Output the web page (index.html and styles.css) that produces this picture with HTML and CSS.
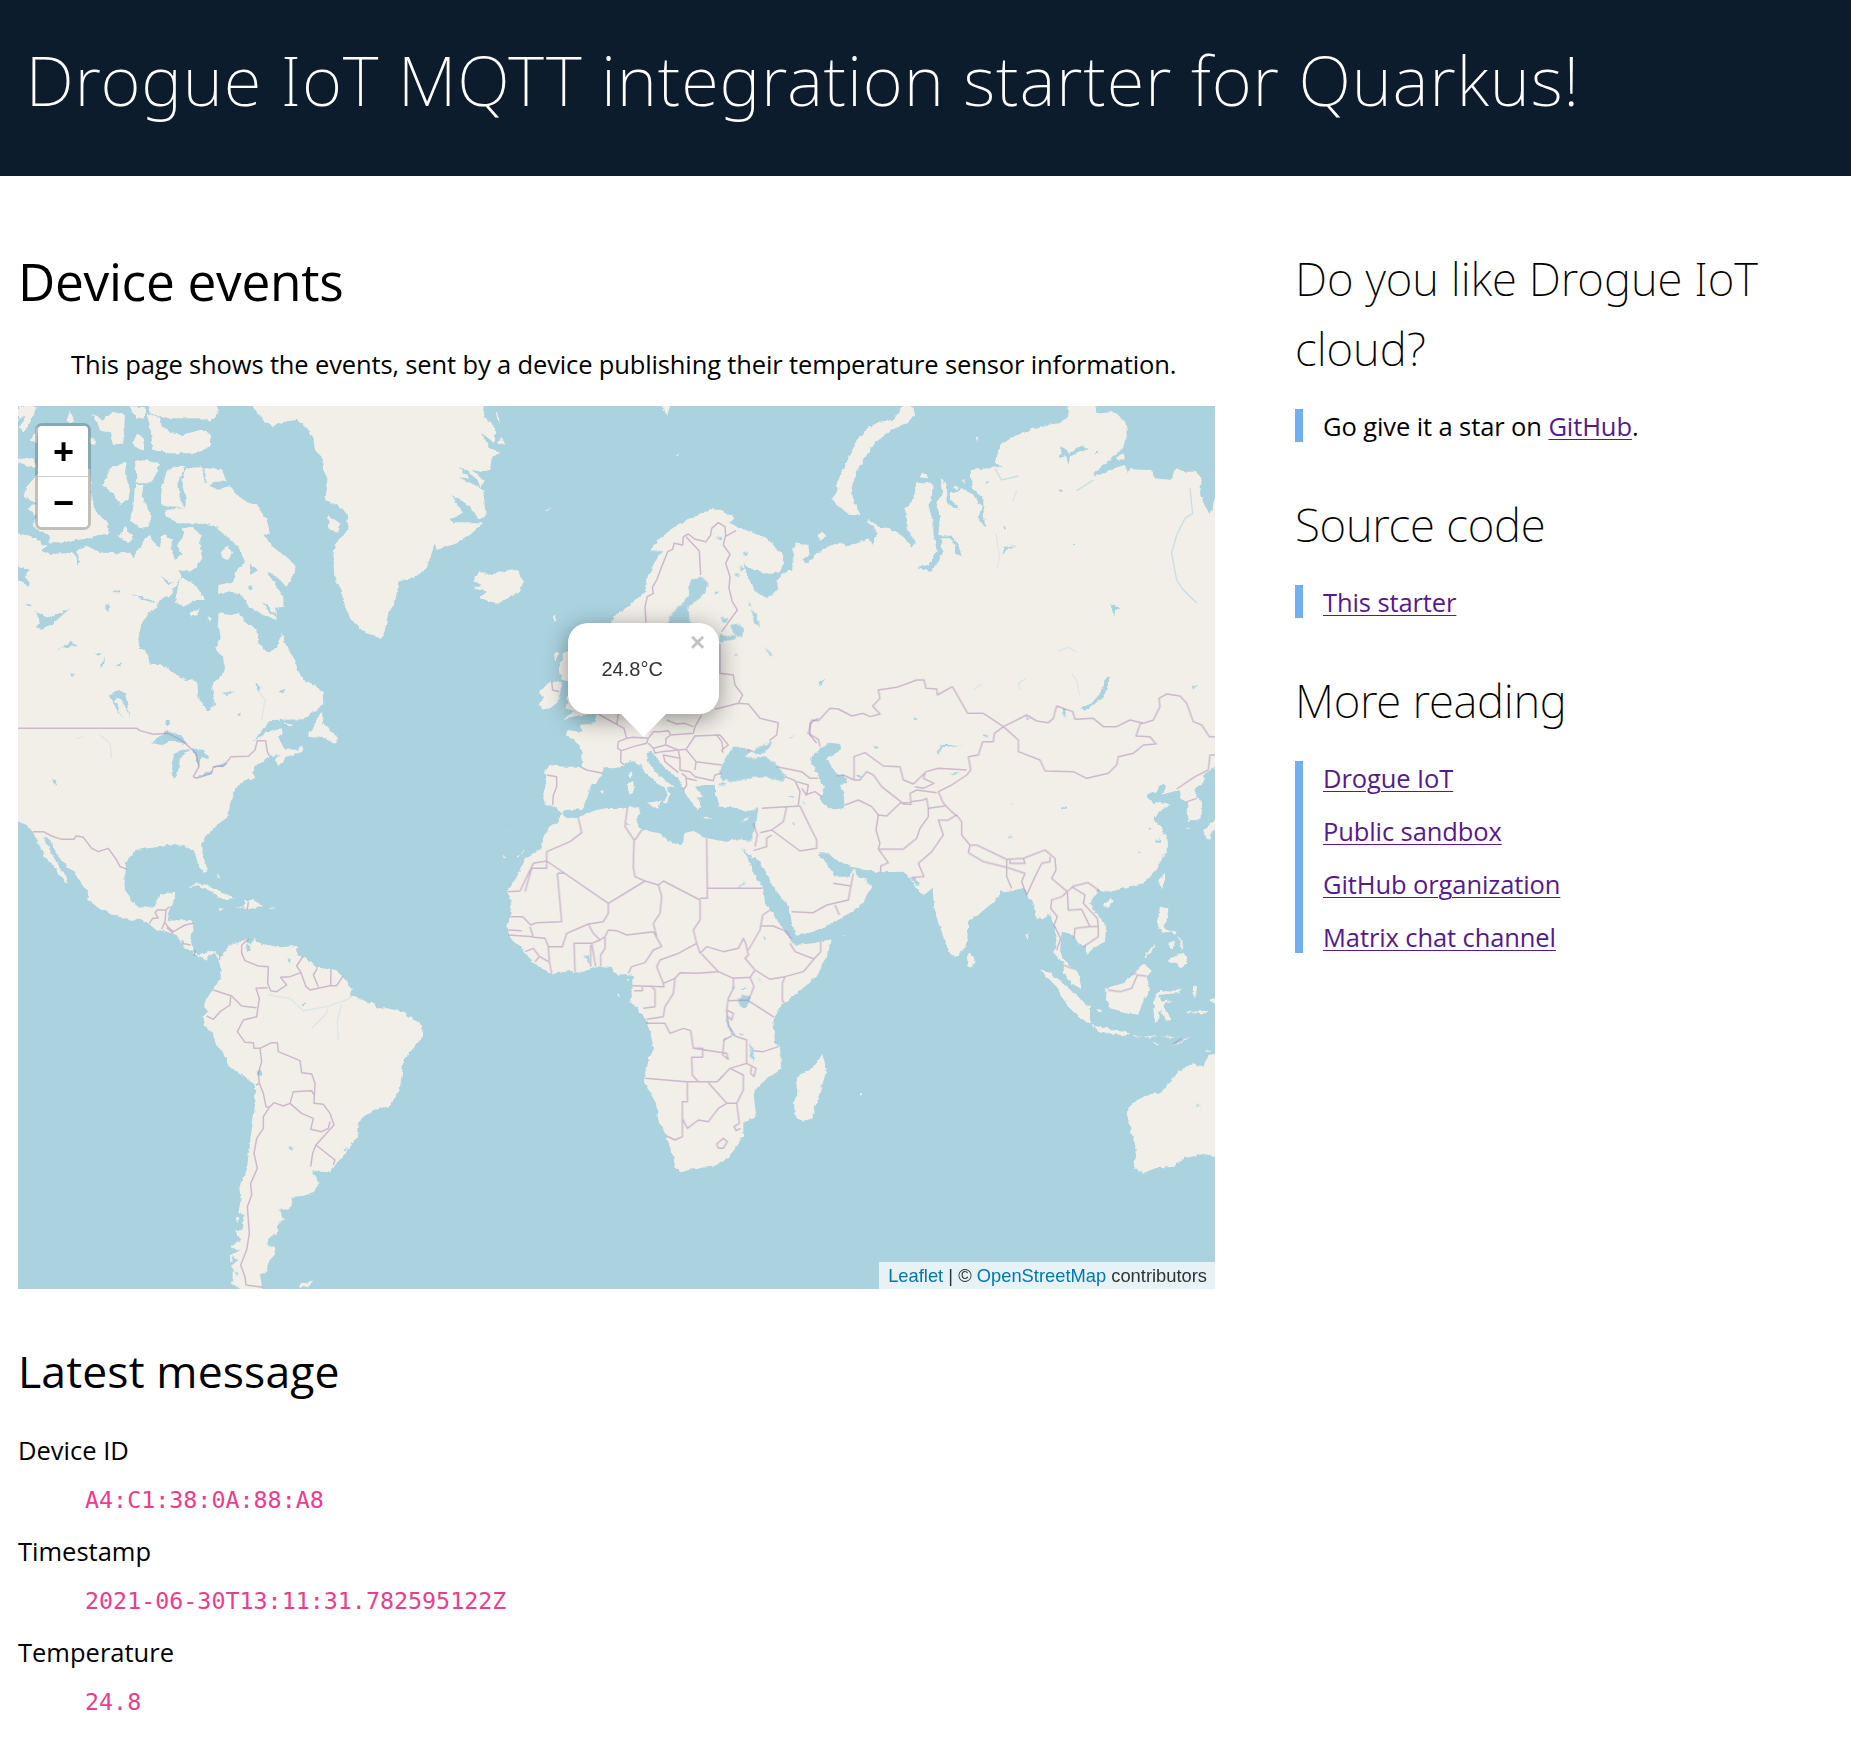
FILE: index.html
```html
<!DOCTYPE html>
<html lang="en">
<head>
<meta charset="utf-8">
<title>Drogue IoT MQTT integration starter for Quarkus!</title>
<link rel="stylesheet" href="styles.css">
</head>
<body>
<header class="banner"><h1 class="banner-title">Drogue IoT MQTT integration starter for Quarkus!</h1></header>
<div class="page">
<main class="content">
<h2 class="title">Device events</h2>
<p class="intro">This page shows the events, sent by a device publishing their temperature sensor information.</p>
<div class="map">
<svg class="tiles" viewBox="18 406 1197 883" preserveAspectRatio="none" aria-hidden="true">
<defs>
<filter id="coast" filterUnits="userSpaceOnUse" x="0" y="390" width="1240" height="920">
<feTurbulence type="fractalNoise" baseFrequency="0.2" numOctaves="2" seed="4" result="n"/>
<feDisplacementMap in="SourceGraphic" in2="n" scale="4" xChannelSelector="R" yChannelSelector="G"/>
<feGaussianBlur stdDeviation="0.5"/>
</filter>
</defs>
<g filter="url(#coast)">
<!-- Canada, United States, Greenland west -->
<g class="land" transform="translate(0 390) scale(.33333)">
<path d="M30 430 54 430 85 437 110 445 125 462 140 470 122 482 150 492 200 490 215 485 230 500 232 530 237 510 232 480 262 468 300 488 360 490 395 488 400 510 408 488 420 470 435 445 450 435 460 455 480 470 484 440 495 432 515 450 515 480 525 510 545 490 530 465 550 440 548 412 575 412 602 432 600 470 607 505 590 530 570 545 530 540 545 555 525 590 510 618 485 625 470 655 445 670 425 700 415 745 418 775 435 780 450 822 480 822 510 840 550 868 592 873 595 925 625 965 645 945 635 885 665 860 675 835 668 800 647 778 662 745 655 700 655 670 690 675 715 670 745 705 772 715 775 760 805 790 830 770 845 730 860 770 885 810 893 840 910 870 945 885 968 910 970 945 940 965 910 988 815 990 790 1015 760 1055 800 1025 845 1015 848 1030 835 1040 850 1075 890 1080 910 1065 905 1085 860 1100 835 1128 822 1115 840 1095 808 1098 765 1130 755 1145 768 1165 740 1170 710 1190 700 1210 690 1240 685 1280 650 1305 620 1335 606 1360 610 1400 623 1440 612 1447 595 1425 585 1390 560 1370 520 1362 480 1370 440 1375 410 1380 385 1405 370 1430 260 1500 220 1445 185 1410 165 1380 150 1350 130 1340 160 1400 180 1435 200 1460 205 1480 175 1455 165 1430 135 1400 110 1350 98 1325 80 1305 54 1295 30 1290z"/>
<path d="M560 235 605 232 615 280 655 300 690 285 710 315 740 335 770 345 800 390 810 430 790 435 830 480 860 500 890 530 860 590 830 560 800 545 850 620 850 650 825 655 830 690 790 675 745 650 735 630 720 610 690 605 655 610 655 585 700 575 705 550 735 515 715 470 680 440 640 405 590 400 530 400 495 375 495 360 555 355 560 320 545 290 550 255zM483 345 485 295 500 245 525 228 555 228 535 275 540 330 558 355 510 352zM613 235 665 238 680 275 640 275 622 290zM440 40 655 40 655 70 630 95 605 85 560 85 490 85 450 70zM440 70 480 85 485 105 510 128 545 135 600 120 630 130 630 170 590 190 510 190 460 180 450 110zM405 215 440 210 480 222 455 280 410 280zM330 235 380 215 375 250 390 300 385 330 360 345 340 310 305 285 320 260zM405 285 430 285 425 320 455 380 445 410 420 415 390 390 400 350zM30 208 100 205 115 250 80 290 70 320 110 340 82 355 110 380 97 410 145 435 150 460 180 460 230 450 270 445 325 430 325 400 290 370 275 330 270 235 120 240zM355 440 375 410 400 440 385 460zM54 48 110 48 100 80 70 130 60 110 80 75 54 90zM200 90 212 60 222 95 205 100zM275 70 310 90 340 65 375 75 370 160 340 165 330 130 300 120zM388 48 435 52 435 85 410 85zM412 130 432 150 432 182 395 165zM90 150 115 110 110 160zM270 145 288 150 285 165 272 160zM665 480 685 470 697 490 680 512 665 500zM540 560 580 580 615 630 590 630 550 650 525 635zM570 670 598 655 590 675 575 680zM622 675 635 680 630 697zM965 962 970 1000 1010 1040 1010 1062 975 1045 920 1040 940 1010zM850 995 882 1008 870 1012z"/>
<path d="M750 40 770 65 790 90 820 108 850 95 890 90 920 115 940 145 945 180 965 200 970 240 985 270 975 330 1000 340 1040 370 1045 420 1005 460 1000 500 1003 560 1025 600 1035 650 1055 690 1085 720 1145 748 1155 720 1165 670 1185 640 1195 575 1230 565 1230 40z"/>
<path d="M985 375 1020 400 1015 430 985 415z"/>
</g>
<!-- Greenland east, Iceland, Europe -->
<g class="land" transform="translate(400 390) scale(.33333)">
<path d="M-10 572 40 565 80 535 95 490 105 460 110 480 170 460 210 435 248 400 160 400 150 385 190 370 155 315 200 340 235 385 257 382 250 300 235 290 175 262 205 265 180 230 220 255 245 295 250 270 215 240 245 245 270 240 275 205 300 185 270 175 245 130 285 160 285 110 255 85 245 40-10 40z"/>
<path d="M220 572 240 540 260 555 290 550 335 538 355 545 370 575 360 605 295 640 260 632 240 622 260 605 220 595 245 585zM293 155 305 145 318 162 300 165zM293 60 300 105 290 80zM435 362 450 352 445 362zM785 40 808 55 800 77zM830 195 838 193 836 199zM458 680 470 676 466 700zM430 890 455 872 485 880 475 935 450 955 430 958 415 945 430 925 420 905zM520 780 485 790 485 810 475 840 490 870 520 880zM463 790 478 790 465 815zM520 900 495 925 505 940 490 955 525 962 485 992 525 978 580 972 580 900zM688 1150 698 1142 696 1168 688 1165zM683 1180 700 1173 702 1208 690 1215 684 1205zM740 1238 782 1232 775 1257zM900 1278 940 1283 920 1287zM1025 1290 1052 1279 1035 1293zM600 1203 612 1200 606 1210z"/>
<path d="M635 698 640 680 690 645 735 605 745 555 770 505 790 480 750 482 775 450 830 405 880 380 930 358 965 360 1003 385 990 400 1050 425 1100 445 1145 490 1152 520 1140 545 1110 552 1060 540 1030 520 1045 560 1060 600 1100 627 1135 600 1130 570 1165 540 1195 540 1190 490 1185 460 1225 470 1228 495 1205 510 1225 520 1250 490 1270 480 1270 1390 1050 1390 1058 1340 1070 1290 1075 1255 1040 1265 1000 1252 960 1250 945 1215 945 1185 915 1185 885 1190 912 1225 893 1222 905 1250 890 1258 870 1230 848 1195 835 1165 800 1140 770 1105 755 1085 740 1090 745 1115 765 1145 790 1165 825 1195 800 1190 812 1210 800 1240 790 1240 803 1215 795 1195 770 1180 735 1145 720 1125 690 1110 665 1130 640 1135 610 1135 605 1160 570 1195 560 1230 545 1258 500 1260 485 1270 465 1250 435 1245 430 1215 440 1170 435 1140 450 1125 490 1130 545 1130 548 1085 525 1050 500 1035 500 1020 545 1025 540 1005 585 1000 595 965 700 900 700 750z"/>
</g>
<!-- Northern Asia -->
<g class="land" transform="translate(800 390) scale(.33333)">
<path d="M-20 470 0 462 20 465 30 490 5 500 10 520 40 525 45 495 80 470 125 455 140 470 180 455 205 445 215 465 230 430 222 412 200 395 205 387 235 410 270 415 310 440 338 472 347 455 320 415 315 355 338 335 350 275 398 280 395 330 385 345 400 400 400 430 410 480 385 525 350 530 390 545 410 525 428 490 422 445 450 445 465 465 465 490 485 498 475 465 455 437 415 435 420 380 407 340 430 310 422 265 438 285 440 340 480 360 470 345 450 330 450 310 490 298 520 315 545 350 535 385 555 412 550 350 550 325 515 295 512 240 560 235 605 230 585 215 600 165 650 135 700 115 740 105 775 100 805 80 805 40 885 40 890 72 940 65 975 95 983 130 970 170 930 210 880 250 885 260 940 235 975 225 980 250 990 238 1050 240 1065 265 1115 270 1125 235 1160 245 1190 245 1205 270 1200 310 1215 350 1232 372 1245 320 1270 310 1270 1130 1245 1135 1215 1150 1205 1180 1180 1200 1205 1240 1205 1285 1165 1295 1160 1260 1165 1235 1140 1225 1145 1205 1130 1197 1085 1215 1100 1190 1090 1180 1065 1200 1040 1215 1045 1235 1060 1245 1075 1235 1110 1243 1065 1275 1060 1290 1085 1310 1100 1350 1100 1390-20 1390z"/>
<path d="M315 40 340 50 345 75 320 100 270 120 225 160 200 195 175 235 155 290 160 335 182 375 150 375 110 345 97 325 115 300 110 280 140 220 170 150 210 110 240 95 280 90zM52 435 65 423 78 437 60 452zM358 262 372 245 383 265zM485 270 495 268 493 282zM950 200 970 190 975 205 960 212zM527 140 535 142 532 155zM462 292 480 290 470 300z"/>
</g>
<!-- Central and South America, Caribbean -->
<g class="land" transform="translate(0 840) scale(.33333)">
<path d="M150-10 165 30 185 60 220 95 250 125 265 155 262 180 300 205 350 228 395 242 420 235 448 252 465 268 500 275 530 285 550 320 575 335 600 350 620 362 625 345 645 340 655 360 665 390 660 420 640 445 618 480 612 500 625 515 608 530 612 555 635 580 655 620 680 655 682 675 715 700 745 718 765 735 766 790 758 850 752 890 745 950 740 990 718 1040 722 1080 715 1120 733 1125 728 1170 705 1170 722 1200 690 1222 718 1230 692 1245 715 1260 690 1280 712 1300 695 1330 720 1346 720 1360 790 1360 780 1305 800 1290 805 1265 828 1240 825 1225 803 1215 805 1195 830 1180 835 1150 850 1140 838 1105 860 1110 878 1100 878 1070 910 1068 940 1060 957 1030 945 1010 935 990 960 995 990 997 1010 970 1040 935 1072 890 1073 850 1100 825 1130 808 1165 803 1180 780 1198 750 1205 710 1210 660 1240 625 1265 595 1268 560 1260 545 1240 540 1210 515 1160 505 1130 505 1125 492 1080 478 1050 468 1055 450 1030 410 1000 388 950 383 925 360 895 345 890 318 840 322 800 315 770 305 765 295 755 310 735 310 748 292 725 305 690 315 665 350 635 332 600 345 580 335 573 305 580 255 570 240 500 242 505 215 520 190 527 155 480 165 465 198 420 205 395 185 375 150 373 120 378 85 370 -10z"/>
<path d="M562 145 590 130 625 135 660 155 705 175 665 178 640 160 600 138zM705 200 735 200 730 180 760 180 790 198 745 208zM650 203 675 207 660 210zM808 203 828 204 812 207zM652 100 660 115 652 112zM900 1330 940 1325 925 1340 900 1342zM708 1130 715 1128 712 1155zM838 1132 856 1136 848 1144z"/>
<path d="M690 1245h8v20h-8zM698 1290h8v30h-8zM882 318h12v6h-12z"/>
</g>
<!-- Africa and Arabia -->
<g class="land" transform="translate(480 780) scale(.33333)">
<path d="M243 100 255 110 295 115 320 100 370 85 440 83 475 78 480 95 470 130 485 150 540 160 570 185 600 195 610 185 612 160 640 152 680 175 740 185 770 178 810 182 825 178 840 160 845 190 822 232 815 235 790 203 815 265 830 300 850 325 855 370 885 410 905 440 925 470 945 495 1000 490 1052 478 1045 520 1010 590 950 640 900 680 880 720 885 790 900 800 903 865 850 905 820 935 828 1005 790 1030 790 1065 750 1130 700 1160 640 1165 605 1177 585 1160 580 1130 560 1070 535 1020 528 970 492 905 500 850 520 810 512 760 495 715 450 660 460 620 460 590 440 582 410 585 390 560 360 558 300 578 270 573 215 582 160 550 130 510 90 475 80 435 95 400 90 350 80 335 105 300 135 235 185 205 190 170 205 145 235 125z"/>
<path d="M835 80 835 150 825 190 820 220 850 260 880 320 925 380 940 440 948 467 1000 455 1065 425 1110 400 1145 370 1173 325 1160 305 1130 290 1125 265 1110 290 1065 290 1050 265 1040 250 1010 215 1010 200 1030 198 1050 225 1075 245 1110 255 1135 250 1140 268 1200 277 1200 0 835 0z"/>
<path d="M1027 822 1040 870 1025 920 995 1015 970 1025 945 1010 942 965 955 935 950 890 1000 865zM68 228 80 232 72 235zM110 228 120 225 112 233zM122 225 130 212 132 220zM1110 955 1120 957zM1085 466 1098 468 1090 472zM440 598 448 594 446 604zM413 644h6v5h-6zM1140 940h6v6h-6zM78 153h6v4h-6z"/>
</g>
<!-- Southern Asia and Oceania -->
<g class="land" transform="translate(860 780) scale(.33333)">
<path d="M-30 260 0 265 60 277 130 275 150 295 165 320 190 345 218 325 222 380 235 430 255 480 270 520 290 532 320 500 325 425 360 400 420 350 420 335 480 328 490 320 500 345 520 370 530 415 550 418 565 400 580 430 590 470 583 520 610 550 612 580 635 610 665 628 655 580 610 540 600 515 605 455 640 465 655 490 678 500 677 525 705 500 735 485 738 440 720 415 688 370 715 330 755 335 800 322 850 310 885 275 918 215 920 190 905 160 880 115 905 90 925 75 885 75 860 50 860 40 885 35 910 10 920 20 910 42 960 30 962 55 985 70 980 100 985 127 1023 110 1025 75 1003 30 1030 10 1035-10-30-10z"/>
<path d="M1080 820 1045 825 1030 860 1000 850 960 870 935 900 905 935 850 950 815 970 800 1000 815 1060 830 1110 822 1160 850 1182 885 1165 940 1160 975 1135 1030 1122 1080 1130zM540 570 570 578 620 620 655 650 690 690 690 728 660 715 620 675 590 620zM690 735 740 745 810 760 800 768 720 755zM735 625 790 610 820 580 850 550 875 572 860 590 870 630 850 660 835 705 790 695 750 685 740 655zM885 645 900 632 945 635 962 625 960 638 895 645 905 665 935 660 908 675 935 720 920 722 900 690 893 725 885 725 880 690zM900 380 925 385 920 420 910 440 930 455 905 458 890 430zM925 540 970 515 983 545 965 565 950 548 925 548zM895 300 915 278 915 300 903 327zM730 372 750 357 762 362 745 383 732 382zM325 510 348 545 335 563 320 558zM1030 150 1075 110 1075 140 1055 155 1048 180 1035 170zM850 530 885 490 880 505 855 532zM925 490 945 485 935 512zM955 465 968 490 965 512zM930 450 950 455 945 465zM1000 615 1012 620 1005 655 998 640zM975 695 1045 692 1040 700 980 700zM1045 660 1080 650 1080 680zM935 798 990 768 960 790zM815 765 850 770 820 770zM850 770 890 768 870 776zM900 770 950 768 930 773zM878 785 900 792 885 793zM1035 812 1060 812 1040 818zM680 675 695 680 685 688zM500 460 508 458 502 485zM20 300-30 280-30 400 10 365 35 325zM712 688h10v5h-10zM980 143h10v4h-10z"/>
</g>
<!-- Lakes and inland seas -->
<g class="water" transform="translate(0 390) scale(.33333)">
<path d="M455 1060 500 1022 540 1035 565 1065 520 1052 485 1065zM520 1090 545 1080 570 1078 540 1105 535 1140 522 1167 515 1150zM575 1075 612 1080 625 1107 602 1100 597 1135 588 1100zM580 1165 640 1140 630 1155zM640 1130 680 1118 670 1132zM330 915 360 900 375 910 390 985 378 955 362 925 345 930 355 960 370 985 350 960zM103 712 120 700 108 665 145 685 210 655 160 700 130 718zM30 520 90 540 75 560 92 590 50 570zM165 785 210 755 235 768 190 772zM315 650 328 640 325 670zM300 830 315 800 312 825zM348 828 368 812 360 832zM288 790 302 790 295 798zM395 612 430 622 470 638 425 630zM480 558 512 578 530 570 505 585zM835 905 860 895 850 910zM765 880 785 890 775 905zM665 908 705 905 680 915zM155 1165 170 1175 165 1185zM75 640 95 645 90 650zM497 990h12v15h-12zM745 585 760 595 745 600zM750 520 775 540 750 555zM905 915 945 890 920 905zM785 632 850 695 800 660zM340 602h20v5h-20zM210 850 228 853 215 857zM710 975 725 965 720 980z"/>
</g>
<g class="water" transform="translate(400 390) scale(.33333)">
<path d="M800 720 810 680 830 655 865 620 870 570 900 560 925 575 920 600 890 635 865 650 868 690 880 720zM957 755 960 728 975 740 1005 735 1005 748zM990 710 1010 698 1032 715 1025 740 1005 735zM1055 660 1070 670 1080 710 1062 700zM1045 635 1060 650 1045 645zM960 1145 975 1105 1000 1070 1025 1070 1055 1082 1035 1095 1060 1108 1090 1098 1130 1125 1155 1155 1150 1175 1100 1162 1060 1160 1010 1175 965 1170zM1058 1085 1090 1065 1122 1055 1100 1082 1075 1095zM950 1182 980 1178 970 1188zM1095 770 1118 795 1108 795zM960 680 985 690 970 697zM1020 525 1035 535 1022 545zM950 445 965 440 968 455zM1015 1005 1035 1012zM1165 1045 1185 1030 1170 1045zM1210 1290 1220 1300zM1030 485h10v10h-10zM1005 550h12v8h-12zM945 605h10v8h-10zM1005 790h8v6h-8z"/>
</g>
<g class="water" transform="translate(800 390) scale(.33333)">
<path d="M30 1105 60 1075 90 1058 122 1062 122 1080 100 1095 80 1105 95 1130 115 1158 130 1155 143 1175 120 1185 130 1210 135 1255 100 1258 65 1240 62 1220 72 1190 50 1150 40 1125zM920 858 928 860 926 880 910 920 880 945 855 962 840 955 875 940 905 905zM410 1085 425 1065 490 1065 430 1072 415 1095zM515 1065 533 1080zM218 1068 240 1070 232 1077zM545 1030 570 1040 555 1040zM450 1148 480 1148 465 1155zM785 168 810 190 848 165 865 178 830 190 810 200 805 225 798 195 780 200zM605 500 615 470 650 465 620 478zM775 298 788 300 780 307zM788 955 800 960 792 983zM678 980 690 985 685 992zM785 1248 800 1252 788 1258zM1175 890 1195 885 1180 898zM930 640 965 655 945 660 945 680 938 655zM60 875 80 865 55 890zM610 405 618 415 612 420zM885 182h8v10h-8zM340 982h12v7h-12zM820 462h5v6h-5zM560 272h6v6h-6zM170 1155 185 1155 180 1165z"/>
</g>
<g class="water" transform="translate(480 780) scale(.33333)">
<path d="M775 655 790 645 808 648 808 662 800 680 780 684zM738 690 748 740 765 768 755 765 740 730zM808 785 820 810 822 850 812 830zM835 590 845 610 838 600zM755 625 768 618 760 628zM715 900 732 885 722 898zM730 778 738 768 732 785zM768 325 790 310 792 298 795 312zM775 755 790 765 782 768zM310 525 328 530 328 553zM925 48 942 48 935 55zM785 623h15v4h-15zM850 472h9v7h-9zM438 133h12v4h-12zM965 60 975 72 970 75zM938 130h6v5h-6z"/>
</g>
<g class="water" transform="translate(0 840) scale(.33333)">
<path d="M738 315 750 318 752 335 742 337zM862 360 872 355 870 370zM768 692 780 690 785 705 778 708zM862 922 878 920 875 932zM1055 522 1062 530zM1160 605 1182 602zM1010 795 1025 782zM1030 930 1045 920 1035 935zM540 295 555 305 548 310zM905 487 918 490 910 495z"/>
</g>
<g class="water" transform="translate(860 780) scale(.33333)">
<path d="M150 292 165 295 180 318 165 312zM600 78 620 85 605 87zM833 212 843 215 838 220zM445 168h10v5h-10zM470 187 478 185zM655 458 670 466zM1008 972 1022 974 1012 978zM452 68h10v4h-10zM866 142h8v6h-8zM888 178h12v7h-12z"/>
</g>
</g>
<!-- Rivers -->
<g class="river">
<path transform="translate(800 390) scale(.33333)" d="M1170 295 1178 370 1155 385 1130 435 1115 490 1130 570 1150 600 1190 638M830 302 880 270M585 235 605 270 655 258"/>
<path class="faint" transform="translate(800 390) scale(.33333)" d="M650 300 638 335M588 430 598 500 592 535M775 783 805 772 828 785M815 850 830 870 838 915M660 900 655 880 678 865M520 900 545 882"/>
<path class="faint" transform="translate(0 840) scale(.33333)" d="M805 465 870 475 910 512 980 500 1040 480 1060 465M935 565 980 520 985 500M1015 600 1012 540 1025 495"/>
<path transform="translate(480 780) scale(.33333)" d="M785 205 810 235"/>
<path class="faint" transform="translate(0 390) scale(.33333)" d="M300 1035 330 1060 335 1105M228 1045 250 1040M770 895 795 930 785 990"/>
</g>
<!-- Country borders -->
<g class="border">
<path transform="translate(0 390) scale(.33333)" d="M54 1015 410 1015 420 1022 460 1033 505 1030 550 1055 588 1090 597 1130 580 1160 590 1165 635 1150 640 1130 672 1127 693 1100 745 1099 765 1080 772 1052 797 1052 802 1085 808 1097M98 1325 130 1325 155 1338 185 1348 222 1348 228 1338 250 1342 275 1375 295 1385 325 1375 350 1410 360 1430 380 1437"/>
<path transform="translate(400 390) scale(.33333)" d="M738 698 735 650 742 620 760 610 757 592 770 570 785 530 803 485 818 478 822 460 848 465 850 440 865 432 885 448 918 455 932 435 935 415 955 398 975 410 977 435 970 465 990 493 977 520 990 560 987 595 997 635 1012 660 965 725M975 440 1008 422M858 440 898 483 902 555M960 760 960 850 1000 855 1005 885 1028 915 1015 940 945 958M1015 940 1045 942 1080 985 1135 998 1130 1035 1108 1052M595 972 650 1003 655 972M650 1003 672 1015 680 1045 655 1055 653 1075 665 1082 700 1070 740 1060 745 1045 700 1042 680 1045M663 1082 662 1115 672 1125M540 1130 560 1140 608 1150M440 1155 470 1160 470 1190 460 1215 458 1245M780 1025 805 1022 812 1035 798 1045 797 1065 760 1075 745 1060M745 1045 760 1025 780 1025M800 990 830 1002 855 1000 880 1010M905 975 885 1010 880 1030 810 1035M797 1065 835 1080 858 1078 885 1038 960 1035 985 1065 965 1080 970 1088M760 1075 765 1090 785 1085 835 1080 840 1105 790 1095 795 1115 835 1148M858 1078 888 1115 965 1125M840 1105 840 1140 870 1145 885 1160 940 1172 945 1155 965 1150M845 1150 858 1160 860 1185 850 1200M885 1140 888 1115M860 1165 890 1172M948 1032 965 1055 970 1080M1040 1078 1060 1085M1130 1130 1205 1145 1230 1165 1255 1165M1155 1160 1185 1172 1200 1205 1195 1245M1190 1175 1225 1185 1220 1215 1205 1195M1215 1215 1245 1205 1265 1220M1255 985 1230 1000 1230 1035 1250 1060M455 875 458 900 478 905"/>
<path transform="translate(800 390) scale(.33333)" d="M60 1070 55 1048 25 1030 35 990 55 992 90 955 115 957 155 978 190 970 210 980 240 972 218 948 240 925 235 900 290 892 350 870 372 870 378 895 410 897 412 915 457 890 503 970 550 970 610 1010 680 975 710 993 745 998 760 985 770 948 818 965 825 988 880 985 910 1010 950 1010 990 990 1030 1000 1060 990 1080 950 1077 925 1100 912 1140 918 1160 940 1180 995 1205 1005 1228 1040 1245 1040M610 1010 655 1050 655 1085 720 1110 735 1143 820 1145 860 1165 925 1150 950 1125 955 1100 1000 1090 1030 1065 1068 1062 1050 1040 1008 1038 1022 998M610 1010 583 1030 580 1055 548 1055 535 1095 505 1100 512 1140 500 1155 455 1185 415 1205 430 1240 455 1265 470 1278M500 1140 415 1135 378 1145 340 1182 310 1170 300 1130 250 1128 195 1088 162 1100 162 1168M110 1158 130 1155 162 1170 180 1170 200 1145 220 1155 245 1190 290 1225 312 1243 333 1243 330 1210 350 1200 410 1208M135 1245 175 1230 215 1250 235 1275 260 1278 300 1240 370 1230 380 1225 385 1255 435 1248M345 1190 370 1195 402 1180 370 1165 375 1150M1130 1197 1185 1160 1225 1140 1230 1095 1245 1095M1162 1235 1190 1225"/>
<path transform="translate(0 840) scale(.33333)" d="M448 250 458 235 475 235 465 218 472 210 498 210 495 245 485 268M498 210 508 200M495 248 505 262 520 275 555 255 580 250M520 280 500 262M545 310 572 315M585 330 583 348M660 345 658 360M748 295 725 315 725 340 735 362 775 378 805 380 803 430 812 452 830 455 860 435 842 412 870 410 903 398 918 440 930 450 990 437 1010 437 1028 410M903 398 890 378 908 350M952 385 940 405 955 440M993 388 992 437M803 443 768 445 778 475 770 530 730 540 712 575 735 607 760 608 762 625 780 625 815 608 832 608 835 635 900 662 905 698 935 702 945 730 942 790 970 793 990 820 1002 855 948 915 1005 960 1000 975M640 450 695 468 725 498 770 503M692 470 690 495 660 515 640 538 620 528M780 625 785 665 775 700 778 730 768 735M778 730 790 760 798 800 808 802 790 830 790 865 770 895 762 940 772 985 752 1030 755 1065 742 1100 748 1180 740 1230 722 1275 735 1310 738 1335 788 1342M808 802 822 788 850 798 870 790 880 755 935 752 942 765M870 790 905 820 940 835 932 868 965 875 985 865 990 845M948 915 938 940 932 980M745 185 742 208"/>
<path transform="translate(480 780) scale(.33333)" d="M295 115 305 158 270 185 200 215 200 265 155 265 135 335M200 243 160 250 120 333 82 335M200 243 385 370 495 303 465 290 460 262 462 180 435 140 442 83M465 180 485 150M232 280 252 280M232 280 245 425 170 428 152 435 128 410 92 410M385 370 385 400 370 425 325 432 260 460 247 500 205 500 195 475 160 472 150 440M85 450 125 452M85 465 160 470M325 432 340 460 360 480 335 490 282 490 285 575M335 490 347 560M332 495 332 560M360 480 375 470 375 505 362 525 362 558M375 470 385 450 410 452 440 465 520 455 545 500 520 510 495 548 455 560 445 580M495 303 535 315 545 350 540 400 520 430 530 470M535 315 550 303 660 360 660 420 640 450 650 490 595 520 540 540 530 560 550 610 552 620 460 617M680 175 682 355 660 355M682 325 848 325M650 490 660 520 680 500 730 515 775 505 790 475 797 490 805 525 795 535 825 570 870 598 915 590 970 575 1002 537 945 515 930 490M665 522 715 575 650 580 600 578 585 595 580 640 555 680 550 710 500 718M550 610 585 595M715 575 760 595 810 592 825 570M870 390 848 405 840 450 805 510M840 438 880 438 920 455 935 480M1022 485 1022 515 1002 537M915 590 907 610 907 660 912 670M810 592 822 620 805 662 883 712M760 595 760 625 745 655 740 690 745 735 765 768 800 780 800 850 750 865 712 905 620 905 495 895M745 662 805 660M740 690 760 700 755 720 745 710M498 730 555 730 570 760 610 745 632 752 640 805 668 805 668 832 635 832 637 885 655 905M640 805 740 820 745 838 728 825 732 780 755 768M820 812 850 815 895 800M800 850 828 865 822 890 812 880 815 855M750 865 790 885 790 930 770 970 740 970 685 908M622 905 622 965 607 965 607 1070 585 1080 560 1068M607 1015 622 1045 655 1020 685 1025 715 985 740 970M770 970 778 1030 762 1040 768 1052 782 1045M710 1092 730 1075 742 1085 730 1105 715 1105zM510 617 525 630 525 680 490 685M462 632 487 632 487 617M205 500 208 545 215 582M135 515 160 505 178 530 165 545M180 530 205 545M845 85 920 80 960 78 975 110 1010 180 1010 205 960 213 875 150 840 158M920 80 910 125 875 150M875 165 860 175 860 200 820 212M820 130 832 165 825 200M935 395 1000 398 1040 375 1105 360 1120 280M1060 310 1112 318M1065 375 1078 405"/>
<path transform="translate(860 780) scale(.33333)" d="M55 105 48 150 60 190 55 207 130 207 170 175 180 145 205 110 205 85M55 207 85 248 62 258 62 275M290 105 265 120 235 120 250 165 215 215 175 250 192 290 155 293M290 105 305 125 305 165 330 195 350 195 440 238 440 262 370 245 325 218 330 195M440 238 490 235 555 210 585 235 588 270 575 295 622 335 605 350 575 360 572 385 592 410 582 435 602 475 590 510M450 235 450 250 495 250 490 235M440 262 440 290 455 325M440 262 495 280 485 305 500 345 525 290 545 250 570 245 570 230M622 335 640 318 685 308 718 332M622 335 625 390 665 388 690 440 715 440 715 470 670 500M635 320 675 345 670 370 712 415 715 440M690 440 645 445 642 475M610 555 635 565M745 630 780 635 815 625 832 585 860 588M812 585 830 580M940 792 965 775"/>
</g>
</svg>
<div class="zoom-control"><a class="zoom-button">+</a><a class="zoom-button">−</a></div>
<div class="popup"><div class="popup-body">24.8°C</div><div class="popup-tip"></div><span class="popup-close">×</span></div>
<div class="attribution"><a>Leaflet</a> | © <a>OpenStreetMap</a> contributors</div>
</div>
<h3 class="subtitle">Latest message</h3>
<dl class="message">
<dt>Device ID</dt><dd><code>A4:C1:38:0A:88:A8</code></dd>
<dt>Timestamp</dt><dd><code>2021-06-30T13:11:31.782595122Z</code></dd>
<dt>Temperature</dt><dd><code>24.8</code></dd>
</dl>
</main>
<aside class="sidebar">
<h3 class="side-title">Do you like Drogue IoT cloud?</h3>
<ul class="links"><li>Go give it a star on <a href="#">GitHub</a>.</li></ul>
<h3 class="side-title tight">Source code</h3>
<ul class="links"><li><a href="#">This starter</a></li></ul>
<h3 class="side-title tight">More reading</h3>
<ul class="links">
<li><a href="#">Drogue IoT</a></li>
<li><a href="#">Public sandbox</a></li>
<li><a href="#">GitHub organization</a></li>
<li><a href="#">Matrix chat channel</a></li>
</ul>
</aside>
</div>
</body>
</html>
```
FILE: styles.css
```css
* { box-sizing: border-box; }

body {
  margin: 0;
  background: #fff;
  color: #000;
  font: 25.5px/40px "Open Sans", "Noto Sans", sans-serif;
}

h1, h2, h3, p, ul, dl, dd { margin: 0; padding: 0; font-weight: 400; }

.banner {
  height: 176px;
  padding-left: 25.5px;
  background: #0d1c2c;
  color: #fff;
}
.banner-title { font-family: "Noto Sans", sans-serif; font-size: 69px; line-height: 159px; font-weight: 200; letter-spacing: .78px; white-space: nowrap; }

.page { display: flex; }
.content { width: 1197px; margin-left: 18px; padding-top: 70px; }
.title { font-size: 51.4px; line-height: 70px; letter-spacing: -.3px; }
.intro { margin: 28px 0 22px; padding-left: 53px; letter-spacing: -.14px; white-space: nowrap; }

.map { position: relative; height: 883px; overflow: hidden; background: #aad3df; font-family: "Liberation Sans", Arial, sans-serif; }
.tiles { display: block; width: 100%; height: 100%; }
.land { fill: #f2efe9; }
.water { fill: #aad3df; }
.border { fill: none; stroke: #a884ae; stroke-opacity: .5; stroke-width: 4.4; stroke-linejoin: round; }
.river { fill: none; stroke: #aad3df; stroke-opacity: .6; stroke-width: 4; }
.faint { stroke-opacity: .3; }

.zoom-control {
  position: absolute;
  left: 17px;
  top: 17px;
  width: 56px;
  border: 3px solid rgba(0, 0, 0, .2);
  border-radius: 7px;
  background-clip: padding-box;
}
.zoom-button {
  display: block;
  height: 50px;
  padding-left: 1px;
  background: #fff;
  color: #000;
  font: bold 36px/57px "Liberation Mono", monospace;
  text-align: center;
}
.zoom-button:first-child { height: 51px; border-bottom: 1px solid #ccc; border-radius: 4px 4px 0 0; }
.zoom-button:last-child { border-radius: 0 0 4px 4px; }

.popup { position: absolute; left: 550px; top: 217px; width: 151px; height: 91px; }
.popup-body {
  height: 91px;
  padding-left: 33.5px;
  border-radius: 20px;
  background: #fff;
  color: #333;
  font-size: 20px;
  line-height: 92px;
  box-shadow: 0 5px 23px rgba(0, 0, 0, .4);
}
.popup-tip {
  position: absolute;
  left: 53px;
  top: 91px;
  width: 45px;
  height: 23px;
  background: #fff;
  clip-path: polygon(0 0, 100% 0, 50% 100%);
}
.popup-close { position: absolute; left: 122px; top: 7px; color: #c3c3c3; font: bold 26px/24px "Liberation Sans", sans-serif; }

.attribution {
  position: absolute;
  right: 0;
  bottom: 0;
  height: 27px;
  padding: 0 8px 0 9px;
  background: rgba(255, 255, 255, .7);
  color: #333;
  font-size: 18.33px;
  line-height: 27px;
}
.attribution a { color: #0078a8; }

.subtitle { margin-top: 52px; font-size: 44.5px; line-height: 60px; letter-spacing: .13px; }
.message { display: grid; gap: 10.6px; margin-top: 29px; }
.message dd { height: 40px; padding-left: 67px; }
.message code { display: block; color: #e83e8c; font: 23.33px/38px "DejaVu Sans Mono", monospace; }

.sidebar { width: 520px; margin-left: 80px; padding-top: 67px; }
.side-title { font-family: "Noto Sans", sans-serif; font-size: 45.8px; line-height: 70px; font-weight: 200; letter-spacing: -.05px; }
.side-title.tight { margin-top: 47.2px; letter-spacing: -.3px; }
.links {
  display: grid;
  gap: 20px;
  margin-top: 25.8px;
  padding-left: 20px;
  border-left: 8px solid #71aeef;
  line-height: 33px;
  letter-spacing: -.1px;
  list-style: none;
}
.links li { height: 33px; line-height: 35px; }
.links a { color: #551a8b; text-decoration-thickness: 1px; text-underline-offset: 3px; }
```
